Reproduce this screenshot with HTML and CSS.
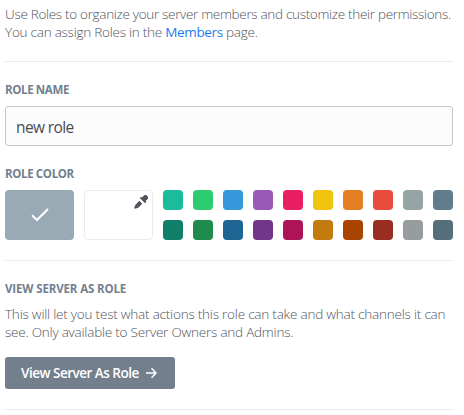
FILE: index.html
```html
<!DOCTYPE html>
<html lang="en">
<head>
<meta charset="utf-8">
<title>Roles</title>
<link rel="stylesheet" href="styles.css">
</head>
<body>
<main class="panel">
  <p class="text intro"><span class="line l1">Use Roles to organize your server members and customize their permissions.</span><span class="line l2">You can assign Roles in the <a class="link" href="#">Members</a> page.</span></p>
  <hr class="divider">
  <section class="name">
    <label class="label" for="role">ROLE NAME</label>
    <input class="input" id="role" type="text" value="new role">
  </section>
  <section class="color">
    <h2 class="label color-label">ROLE COLOR</h2>
    <div class="picker">
      <button class="chip selected" aria-label="Default color">
        <svg width="18" height="14" viewBox="0 0 18 14"><path d="M1 7.2 6 12 17 1" fill="none" stroke="#fff" stroke-width="2"/></svg>
      </button>
      <button class="chip custom" aria-label="Custom color">
        <svg width="14" height="14" viewBox="0 0 14 14"><path d="M13.200.9a2.500 2.500 0 0 0-3.700 0L8 2.400l-.9-.6-1.300 1.300 5.200 5.200 1.300-1.300-.7-.9 1.600-1.500a2.500 2.500 0 0 0 0-3.700z" fill="#4f545c"/><path d="M5.300 5.800 1.300 9.900.2 13l.8.800 3.200-1L8.300 8.800z" fill="#4f545c"/></svg>
      </button>
      <div class="swatches">
        <i class="s teal"></i><i class="s green"></i><i class="s blue"></i><i class="s purple"></i><i class="s pink"></i><i class="s yellow"></i><i class="s orange"></i><i class="s red"></i><i class="s gray"></i><i class="s slate"></i>
        <i class="s dteal"></i><i class="s dgreen"></i><i class="s dblue"></i><i class="s dpurple"></i><i class="s dpink"></i><i class="s dyellow"></i><i class="s dorange"></i><i class="s dred"></i><i class="s dgray"></i><i class="s dslate"></i>
      </div>
    </div>
  </section>
  <hr class="divider">
  <section class="view">
    <h2 class="label view-label">VIEW SERVER AS ROLE</h2>
    <p class="text"><span class="line l3">This will let you test what actions this role can take and what channels it can</span><span class="line l4">see. Only available to Server Owners and Admins.</span></p>
    <button class="button"><span class="button-text">View Server As Role</span><svg width="11" height="12" viewBox="0 0 11 12"><path d="M0 6H10M5.500 1.300 10 6 5.500 10.700" fill="none" stroke="#fff" stroke-width="1.500"/></svg></button>
  </section>
  <hr class="divider">
</main>
</body>
</html>
```
FILE: styles.css
```css
* { box-sizing: border-box; }
body {
  margin: 0;
  background: #fff;
  font-family: "Open Sans", "Noto Sans", sans-serif;
}
.panel { width: 448px; margin-left: 5px; padding-top: 5px; }
.text { margin: 0; font-size: 13.5px; line-height: 18px; font-weight: 350; color: #4f545c; }
.line { display: block; width: max-content; white-space: nowrap; }
.l1 { letter-spacing: -0.31px; }
.l2 { letter-spacing: -0.24px; }
.l3 { letter-spacing: -0.21px; }
.l4 { letter-spacing: -0.22px; }
.link { color: #1a7cf0; font-weight: 400; letter-spacing: -0.36px; text-decoration: none; }
.divider { margin: 20px 0 0; border: 0; height: 1px; background: #e9eaeb; }
.label {
  display: block;
  width: max-content;
  margin: 0;
  font-size: 11.5px;
  line-height: 16px;
  font-weight: 700;
  letter-spacing: -0.36px;
  color: #72808f;
}
.name { padding-top: 20px; }
.input {
  display: block;
  width: 448px;
  height: 40px;
  margin-top: 8px;
  padding: 2px 10px 0;
  border: 1px solid #c6c8cc;
  border-radius: 3px;
  background: #fcfcfc;
  font: 400 15.5px "Open Sans", sans-serif;
  letter-spacing: -0.6px;
  color: #484b51;
}
.color { padding-top: 20px; }
.picker { display: flex; gap: 10px; margin-top: 8px; }
.chip { width: 69px; height: 50px; padding: 0; border: 0; border-radius: 4px; display: flex; }
.selected { background: #99aab5; align-items: center; justify-content: center; }
.custom { background: #fff; border: 1px solid #ececed; justify-content: flex-end; padding: 4px; }
.swatches { display: grid; grid-template-columns: repeat(10, 20px); gap: 10px; }
.s { height: 20px; border-radius: 4px; }
.teal { background: #1abc9c; }
.green { background: #2ecc71; }
.blue { background: #3498db; }
.purple { background: #9b59b6; }
.pink { background: #e91e63; }
.yellow { background: #f1c40f; }
.orange { background: #e67e22; }
.red { background: #e74c3c; }
.gray { background: #95a5a6; }
.slate { background: #607d8b; }
.dteal { background: #11806a; }
.dgreen { background: #1f8b4c; }
.dblue { background: #206694; }
.dpurple { background: #71368a; }
.dpink { background: #ad1457; }
.dyellow { background: #c27c0e; }
.dorange { background: #a84300; }
.dred { background: #992d22; }
.dgray { background: #979c9f; }
.dslate { background: #546e7a; }
.view { padding-top: 20px; }
.view-label { margin-bottom: 8px; letter-spacing: -0.13px; }
.button {
  display: flex;
  align-items: center;
  gap: 7px;
  width: 170px;
  height: 32px;
  margin-top: 16px;
  padding: 0 16px;
  border: 0;
  border-radius: 3px;
  background: #737f8d;
  color: #fff;
  font: 600 13.5px/20px "Open Sans", sans-serif;
}
.button-text { white-space: nowrap; letter-spacing: -0.5px; }
```
